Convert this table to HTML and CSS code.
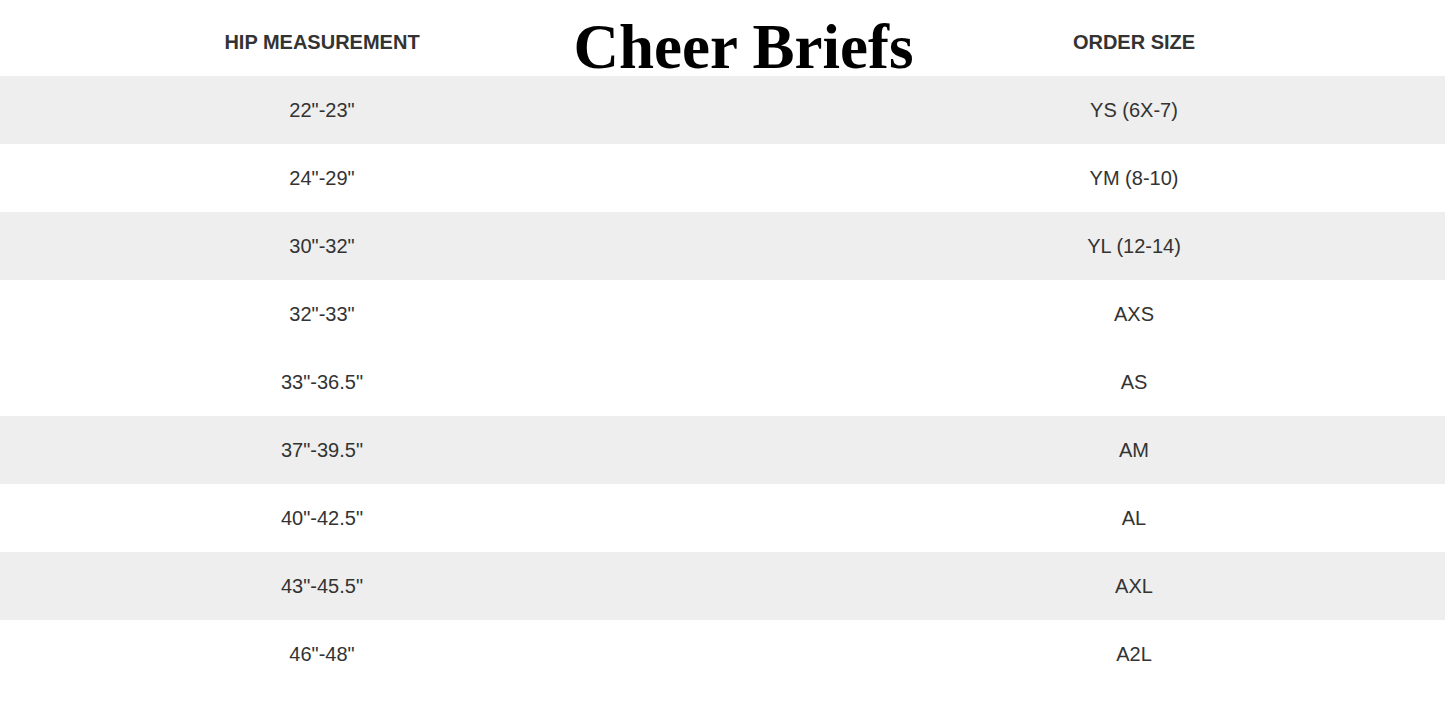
FILE: index.html
```html
<!DOCTYPE html>
<html>
<head>
<meta charset="utf-8">
<link rel="stylesheet" href="styles.css">
</head>
<body>
<div class="chart">
  <div class="row head">
    <div class="cell left hd">HIP MEASUREMENT</div>
    <div class="cell mid"><h1 class="title">Cheer Briefs</h1></div>
    <div class="cell right hd">ORDER SIZE</div>
  </div>
  <div class="row gray"><div class="cell left">22"-23"</div><div class="cell mid"></div><div class="cell right">YS (6X-7)</div></div>
  <div class="row"><div class="cell left">24"-29"</div><div class="cell mid"></div><div class="cell right">YM (8-10)</div></div>
  <div class="row gray"><div class="cell left">30"-32"</div><div class="cell mid"></div><div class="cell right">YL (12-14)</div></div>
  <div class="row"><div class="cell left">32"-33"</div><div class="cell mid"></div><div class="cell right">AXS</div></div>
  <div class="row"><div class="cell left">33"-36.5"</div><div class="cell mid"></div><div class="cell right">AS</div></div>
  <div class="row gray"><div class="cell left">37"-39.5"</div><div class="cell mid"></div><div class="cell right">AM</div></div>
  <div class="row"><div class="cell left">40"-42.5"</div><div class="cell mid"></div><div class="cell right">AL</div></div>
  <div class="row gray"><div class="cell left">43"-45.5"</div><div class="cell mid"></div><div class="cell right">AXL</div></div>
  <div class="row"><div class="cell left">46"-48"</div><div class="cell mid"></div><div class="cell right">A2L</div></div>
</div>
</body>
</html>
```

FILE: styles.css
```css
html, body {
  margin: 0;
  padding: 0;
  background: #ffffff;
}
body {
  font-family: "Liberation Sans", Arial, sans-serif;
  color: #333333;
  width: 1445px;
  height: 703px;
  overflow: hidden;
}
.chart {
  display: flex;
  flex-direction: column;
}
.row {
  display: grid;
  grid-template-columns: 644px 199px 1fr;
  height: 68px;
  align-items: center;
  font-size: 20px;
}
.row.gray {
  background: #eeeeee;
}
.row.head {
  height: 76px;
}
.cell {
  display: flex;
  justify-content: center;
  align-items: center;
  white-space: nowrap;
}
.right {
  padding-right: 20px;
}
.hd {
  font-weight: bold;
  font-size: 20px;
  align-self: start;
  padding-top: 31px;
  line-height: 22px;
}
.mid {
  height: 100%;
  align-items: flex-end;
}
.title {
  margin: 0 0 -3px 0;
  font-family: "Liberation Serif", "Times New Roman", serif;
  font-weight: bold;
  font-size: 63px;
  line-height: 1;
  color: #000000;
}
```
